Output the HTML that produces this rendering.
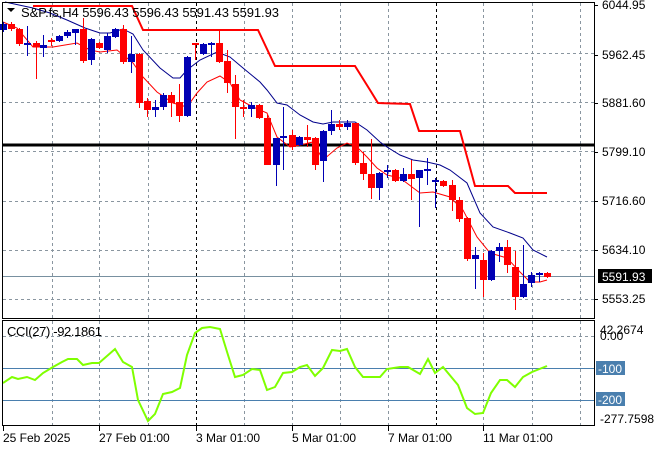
<!DOCTYPE html>
<html><head><meta charset="utf-8"><style>
html,body{margin:0;padding:0;background:#fff;width:660px;height:450px;overflow:hidden}
svg{display:block}
text{font-family:"Liberation Sans",sans-serif;font-size:12px;fill:#000}
</style></head><body>
<svg id="s" width="660" height="450" xmlns="http://www.w3.org/2000/svg">
<rect x="0" y="0" width="660" height="450" fill="#fff"/>
<g id="grid" stroke="#8a96a0" stroke-width="1" stroke-dasharray="3,3"></g>
<g id="cci"></g>
<g id="main"></g>
<rect x="2.5" y="2.5" width="592" height="316" fill="none" stroke="#000"/>
<rect x="2.5" y="320.5" width="592" height="105" fill="none" stroke="#000"/>
<g id="lbl"></g>
</svg>
<script>
var NS="http://www.w3.org/2000/svg",s=document.getElementById('s');
function el(p,t,a,txt){var e=document.createElementNS(NS,t);for(var k in a)e.setAttribute(k,a[k]);if(txt!=null)e.textContent=txt;document.getElementById(p).appendChild(e);return e;}
var vx=[52,99,148,196,244,292,340,388,436,483,532,580];
vx.forEach(function(x){var blk=(x==196||x==436);
 var st=blk?'#000':'#8a96a0';
 el('grid','line',{x1:x+.5,y1:3,x2:x+.5,y2:318,stroke:st});
 el('grid','line',{x1:x+.5,y1:321,x2:x+.5,y2:425,stroke:st});});
[53,102,151,201,250,299].forEach(function(y){el('grid','line',{x1:3,y1:y+.5,x2:594,y2:y+.5});});
el('grid','line',{x1:3,y1:336.5,x2:594,y2:336.5});
el('cci','line',{x1:3,y1:368.5,x2:594,y2:368.5,stroke:'#4a7fae'});
el('cci','line',{x1:3,y1:400.5,x2:594,y2:400.5,stroke:'#4a7fae'});
var cp=[[3,383],[12,377],[18,379],[27,377],[35,380],[43,373],[53,367],[62,362],[68,359],[77,359],[83,365],[92,363],[99,363],[115,349],[123,362],[132,367],[138,400],[148,421],[155,414],[163,394],[172,392],[180,388],[187,355],[195,333],[202,328],[210,327],[220,329],[228,355],[235,377],[243,375],[252,369],[260,370],[267,390],[275,387],[283,373],[292,372],[300,367],[307,365],[315,376],[323,368],[332,350],[340,351],[347,349],[355,367],[363,377],[380,377],[387,369],[400,367],[408,367],[420,374],[428,359],[435,373],[443,367],[458,385],[467,408],[475,414],[483,413],[491,393],[500,380],[507,380],[515,387],[523,377],[532,372],[547,366]];
el('cci','polyline',{points:cp.join(' '),fill:'none',stroke:'#7fff00','stroke-width':2});
el('main','line',{x1:3,y1:276.5,x2:594,y2:276.5,stroke:'#7890a0'});
el('main','line',{x1:3,y1:145,x2:594,y2:145,stroke:'#000','stroke-width':3});
el('main','polyline',{points:'33,6 132,6 143,30 258,30 275,66 355,66 370,90 378,103 410,104 419,131 460,131 475,186 508,186 515,193 547,193',fill:'none',stroke:'#f00','stroke-width':2});
el('main','polyline',{points:'5,2 33,8 50,13 67,20 85,28 100,33 110,33 123,29 133,34 143,50 160,68 173,78 180,78 187,70 200,60 217,52 230,57 243,68 260,82 267,90 277,103 287,105 300,115 313,122 323,124 333,122 355,122 367,130 380,142 387,147 400,155 413,160 427,162 440,165 450,170 467,183 480,213 493,227 510,233 523,238 533,250 547,257',fill:'none',stroke:'#00008b'});
el('main','polyline',{points:'3,22 17,28 33,47 53,47 77,43 90,50 100,52 117,50 127,58 133,63 143,77 157,92 173,103 187,107 197,93 207,82 220,76 230,83 240,100 253,107 267,113 277,137 290,147 300,145 313,142 323,160 337,148 347,143 357,147 367,157 377,168 387,175 400,178 420,193 433,192 450,197 463,210 477,237 490,253 507,258 520,272 530,282 540,282 547,280',fill:'none',stroke:'#f00'});
var C=[[3,24,30,22,32,'b'],[11,24,29,22,31,'r'],[19,29,44,28,46,'r'],[27,43,45,26,56,'b'],[36,43,47,41,79,'r'],[43,45,48,35,57,'b'],[51,40,41,38,46,'r'],[59,36,41,35,42,'b'],[67,32,36,30,38,'b'],[75,29,33,29,45,'b'],[83,29,61,18,63,'r'],[91,39,60,38,65,'b'],[99,43,48,42,49,'r'],[107,36,50,33,53,'b'],[115,29,37,28,38,'b'],[123,29,62,25,64,'r'],[131,54,62,36,73,'b'],[139,54,103,53,108,'r'],[147,101,110,98,117,'r'],[155,107,110,100,117,'b'],[163,95,107,93,110,'b'],[171,95,103,92,117,'r'],[179,102,116,84,122,'r'],[187,57,116,56,117,'b'],[195,43,45,43,60,'r'],[203,44,54,43,55,'b'],[211,43,45,42,57,'b'],[219,43,62,30,63,'r'],[227,61,83,50,93,'r'],[235,84,107,75,139,'r'],[243,107,109,100,117,'r'],[251,105,109,102,117,'b'],[259,105,118,104,119,'r'],[267,118,165,115,165,'r'],[276,138,165,138,186,'b'],[283,136,138,107,170,'b'],[292,135,147,130,150,'r'],[299,137,145,136,146,'b'],[307,137,140,125,147,'r'],[315,138,165,137,170,'r'],[323,131,161,130,182,'b'],[331,124,131,110,135,'b'],[339,124,127,120,130,'r'],[347,123,127,120,130,'b'],[355,123,163,123,165,'r'],[363,163,174,152,180,'r'],[371,174,188,139,199,'r'],[379,173,188,172,200,'b'],[387,170,172,165,178,'b'],[395,170,181,169,182,'r'],[403,174,181,168,182,'b'],[411,174,179,160,200,'r'],[419,170,178,170,227,'b'],[427,169,171,158,185,'b'],[435,180,182,178,208,'b'],[443,181,186,180,187,'r'],[452,185,200,180,211,'r'],[459,200,219,197,222,'r'],[467,218,259,217,261,'r'],[475,255,259,247,289,'b'],[483,260,280,253,297,'r'],[491,251,280,250,281,'b'],[499,247,251,243,262,'b'],[507,247,265,240,273,'r'],[515,267,297,251,310,'r'],[523,284,297,245,298,'b'],[531,275,283,272,287,'b'],[539,273,275,272,282,'b'],[547,273,277,272,278,'r']];
C.forEach(function(c){var col=c[5]=='b'?'#0000b4':'#f00';
 el('main','line',{x1:c[0]+.5,y1:c[3],x2:c[0]+.5,y2:c[4],stroke:col});
 var h=Math.max(2,c[2]-c[1]);el('main','rect',{x:c[0]-3,y:c[1],width:7,height:h,fill:col});});
el('lbl','path',{d:'M7 8 L15 8 L11 12 Z',fill:'#000'});
el('lbl','text',{x:21,y:17,style:'font-size:13px',textLength:258,lengthAdjust:'spacing'},'S&P.fs,H4  5596.43 5596.43 5591.43 5591.93');
el('lbl','text',{x:7,y:336,style:'font-size:13px',textLength:95},'CCI(27) -92.1861');
[['6044.95',5],['5962.45',55],['5881.60',103],['5799.10',152],['5716.60',201],['5634.10',250],['5553.25',299]].forEach(function(l){
 el('lbl','line',{x1:594,y1:l[1]+.5,x2:598,y2:l[1]+.5,stroke:'#000'});
 el('lbl','text',{x:602,y:l[1]+4},l[0]);});
el('lbl','rect',{x:598,y:269,width:54,height:14,fill:'#000'});
el('lbl','text',{x:602,y:281,style:'fill:#fff'},'5591.93');
el('lbl','text',{x:600,y:334},'42.2674');
el('lbl','text',{x:600,y:340},'0.00');
el('lbl','rect',{x:596,y:361,width:29,height:14,fill:'#4a7fae'});
el('lbl','text',{x:598,y:373,style:'fill:#fff'},'-100');
el('lbl','rect',{x:596,y:392,width:29,height:14,fill:'#4a7fae'});
el('lbl','text',{x:598,y:404,style:'fill:#fff'},'-200');
el('lbl','text',{x:600,y:423},'-277.7598');
[['25 Feb 2025',3],['27 Feb 01:00',99],['3 Mar 01:00',196],['5 Mar 01:00',292],['7 Mar 01:00',388],['11 Mar 01:00',483]].forEach(function(d){
 el('lbl','line',{x1:d[1]+.5,y1:426,x2:d[1]+.5,y2:431,stroke:'#000'});
 el('lbl','text',{x:d[1],y:442},d[0]);});
</script>
</body></html>
